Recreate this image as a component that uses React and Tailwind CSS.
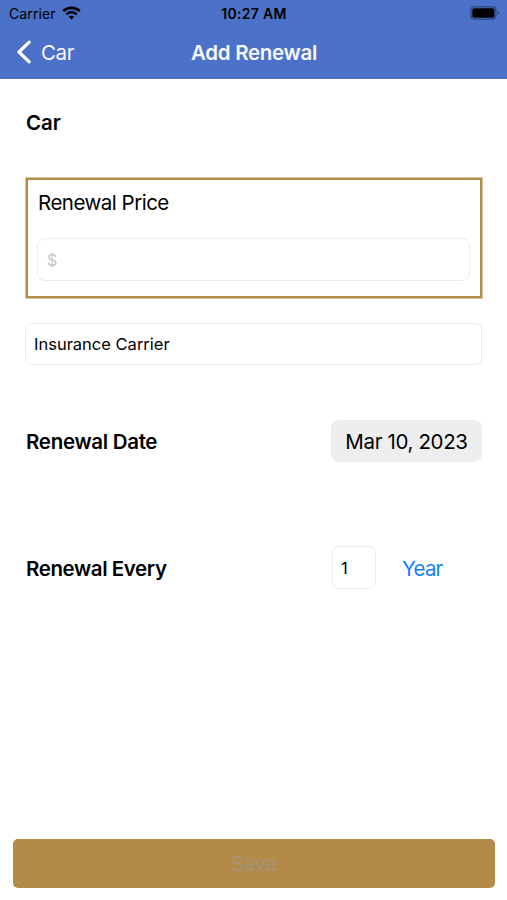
import { useState } from "react";

const WifiIcon = () => (
  <svg className="w-[19px] h-[14px]" viewBox="0 0 19 14" fill="none">
    <path d="M1.2 5C5.8 0.8 13.2 0.8 17.8 5" stroke="black" strokeWidth="2.7" />
    <path d="M4.3 8.3C7.3 5.6 11.7 5.6 14.7 8.3" stroke="black" strokeWidth="2.4" />
    <path d="M9.5 13.6L6.7 10.7C8.2 9.3 10.8 9.3 12.3 10.7Z" fill="black" />
  </svg>
);

const BatteryIcon = () => (
  <svg className="w-[30px] h-[14px]" viewBox="0 0 30 14" fill="none">
    <rect x="0.9" y="0.9" width="25" height="12.2" rx="3.4" stroke="black" strokeOpacity="0.4" strokeWidth="1.2" />
    <rect x="2.3" y="2.3" width="22.2" height="9.4" rx="1.8" fill="black" />
    <path d="M27.6 4.8C29.6 5.6 29.6 8.4 27.6 9.2Z" fill="black" fillOpacity="0.4" />
  </svg>
);

const StatusBar = () => (
  <div className="grid grid-cols-[1fr_auto_1fr] items-center h-[26px] pl-[9px] pr-[7px] text-black">
    <div className="flex items-center gap-[6px] text-[14px] tracking-[0.1px]">
      <span className="pt-px">Carrier</span>
      <WifiIcon />
    </div>
    <span className="pt-px pr-px text-center text-[14px] font-semibold tracking-[0.3px]">
      10:27 AM
    </span>
    <div className="flex justify-end">
      <BatteryIcon />
    </div>
  </div>
);

const NavBar = () => (
  <div className="grid grid-cols-[1fr_auto_1fr] items-center h-[52px] pl-4 pr-[15px] text-[#f7f9ff]">
    <button className="flex items-center gap-[9px] text-[20.5px] tracking-[-0.4px]">
      <svg className="w-[16px] h-[24px]" viewBox="0 0 16 24" fill="none">
        <path d="M13.2 2.2L3 12L13.2 21.8" stroke="white" strokeWidth="3.2" strokeLinecap="round" strokeLinejoin="round" />
      </svg>
      <span className="pt-[3px]">Car</span>
    </button>
    <h1 className="pt-[3px] text-[20.5px] font-semibold tracking-[-0.3px]">Add Renewal</h1>
  </div>
);

const App = () => {
  const [price, setPrice] = useState("");
  const [carrier, setCarrier] = useState("Insurance Carrier");
  const [count, setCount] = useState("1");

  return (
    <div className="flex flex-col h-[900px] bg-white text-black font-['Inter',sans-serif]">
      <header className="h-[79px] shrink-0 bg-[#4b71c8]">
        <StatusBar />
        <NavBar />
      </header>

      <main className="flex-1 flex flex-col pl-[26px] pr-[25px]">
        <h2 className="mt-[30px] text-[20.5px] leading-[28px] font-semibold tracking-[-0.1px]">Car</h2>

        {/* Price */}
        <section className="mt-[41px] h-[120px] border-2 border-[#b38a48] shadow-[0_0_0_0.5px_#b38a48] pl-[9px] pr-[10px] pt-[9px]">
          <label className="block pl-px text-[20.5px] leading-[28px] tracking-[-0.5px]">
            Renewal Price
          </label>
          <input
            className="mt-[21px] w-full h-[43px] rounded-[8px] border border-[#ececec] px-[9px] text-[16px] placeholder:text-[#c4c4c6] outline-none"
            placeholder="$"
            value={price}
            onChange={(e) => setPrice(e.target.value)}
          />
        </section>

        <input
          className="mt-[25px] -ml-px h-[42px] rounded-[6px] border border-[#ececec] px-[8px] text-[16.5px] outline-none"
          value={carrier}
          onChange={(e) => setCarrier(e.target.value)}
        />

        {/* Date */}
        <div className="mt-[55px] h-[42px] flex items-center justify-between">
          <span className="pt-[2px] text-[20.5px] font-semibold tracking-[-0.3px]">Renewal Date</span>
          <button className="w-[151px] h-[42px] pt-[2px] rounded-[8px] bg-[#eeeeef] text-[20.5px] tracking-[-0.35px]">
            Mar 10, 2023
          </button>
        </div>

        {/* Interval */}
        <div className="mt-[84px] h-[43px] flex items-center">
          <span className="w-[306px] pt-[3px] text-[20.5px] font-semibold tracking-[-0.4px]">
            Renewal Every
          </span>
          <input
            className="w-[44px] h-[43px] rounded-[7px] border border-[#ececec] px-[8px] text-[16.5px] outline-none"
            value={count}
            onChange={(e) => setCount(e.target.value)}
          />
          <button className="ml-[26px] pt-[3px] text-[20.5px] tracking-[-0.8px] text-[#157efb]">Year</button>
        </div>
      </main>

      <footer className="pl-[13px] pr-[12px] pb-[12px]">
        <button
          className="w-full h-[49px] pt-[2px] rounded-[5px] bg-[#b38a48] text-[20.5px] tracking-[-0.5px] text-[#a3957b]"
          disabled
        >
          Save
        </button>
      </footer>
    </div>
  );
};

export default App;
